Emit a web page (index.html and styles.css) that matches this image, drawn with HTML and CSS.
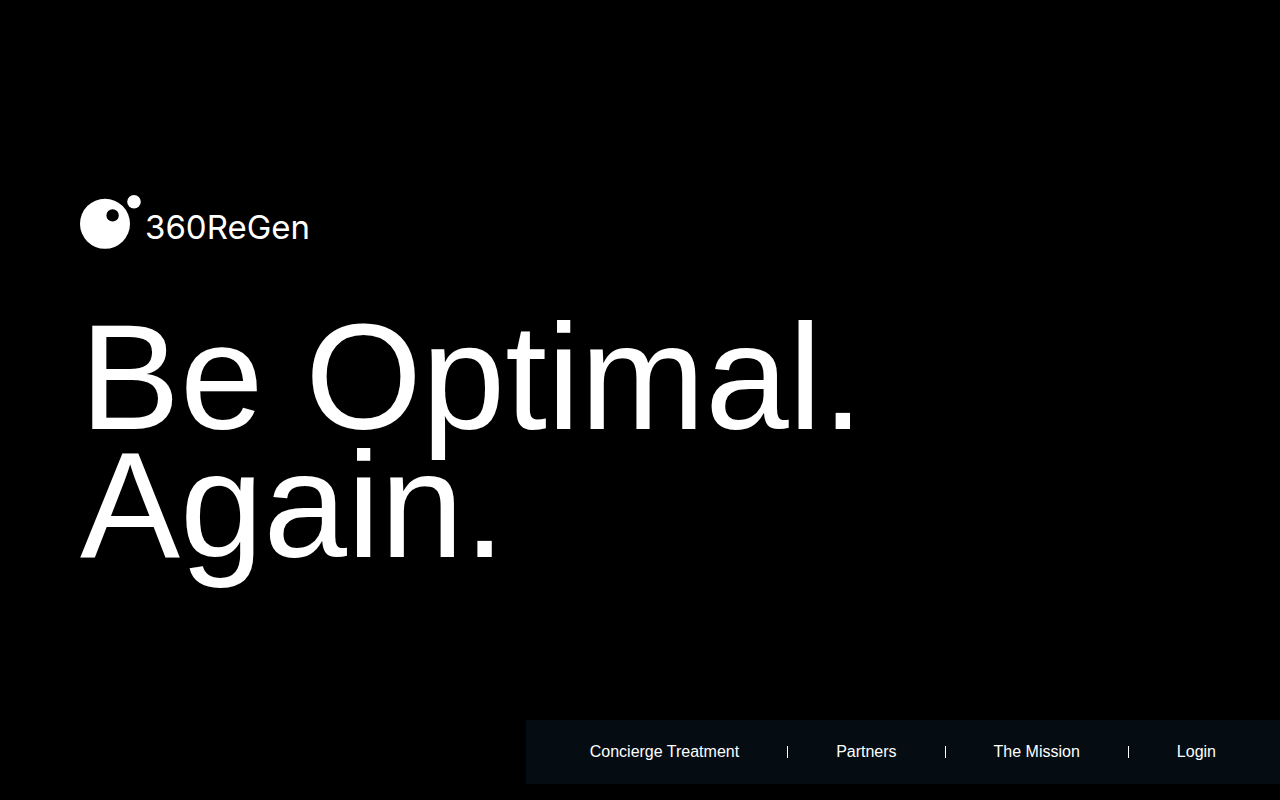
FILE: index.html
```html
<!DOCTYPE html>
<html lang="en">
<head>
    <meta charset="UTF-8">
    <meta name="viewport" content="width=device-width, initial-scale=1.0">
    <title>360ReGen</title>
    <link rel="stylesheet" href="styles.css">
</head>
<body>
    <main class="hero">
        <a href="#" class="logo" aria-label="360ReGen">
            <svg class="logo-img" viewBox="0 0 232 56" width="232" height="56">
                <circle cx="25" cy="28.8" r="25" fill="#fff"/>
                <circle cx="32.6" cy="20.4" r="6.2" fill="#000"/>
                <circle cx="54" cy="6.8" r="6.8" fill="#fff"/>
                <text class="logo-text" x="65" y="44">360ReGen</text>
            </svg>
        </a>
        <h1 class="headline">Be Optimal.<br>Again.</h1>
    </main>
    <nav class="bottom-nav">
        <ul class="nav-list">
            <li><a href="#">Concierge Treatment</a></li>
            <li><a href="#">Partners</a></li>
            <li><a href="#">The Mission</a></li>
            <li><a href="#">Login</a></li>
        </ul>
    </nav>
</body>
</html>
```

FILE: styles.css
```css
* {
    box-sizing: border-box;
}
body {
    margin: 0;
    min-height: 100vh;
    display: flex;
    flex-direction: column;
    background-color: #000;
    color: #fff;
    font-family: Arial, 'Liberation Sans', sans-serif;
}
.hero {
    flex: 1;
    display: flex;
    flex-direction: column;
    justify-content: center;
    align-items: flex-start;
    padding: 44px 80px 0;
}
.logo {
    display: block;
    margin-bottom: 62px;
}
.logo-img {
    display: block;
}
.logo-text {
    font-family: Inter, sans-serif;
    font-size: 33px;
    fill: #fff;
}
.headline {
    margin: 0;
    font-size: 150px;
    font-weight: 400;
    line-height: 128px;
}
.bottom-nav {
    align-self: flex-end;
    margin-bottom: 16px;
    padding: 20px 64px;
    background-color: #050d12;
}
.nav-list {
    display: flex;
    align-items: center;
    margin: 0;
    padding: 0;
    list-style: none;
}
.nav-list li {
    display: flex;
    align-items: center;
    font-size: 16px;
    line-height: 24px;
}
.nav-list li + li::before {
    content: '';
    width: 1px;
    height: 12px;
    margin: 0 48px;
    background-color: #fff;
}
.nav-list a {
    color: #fff;
    text-decoration: none;
}
```
